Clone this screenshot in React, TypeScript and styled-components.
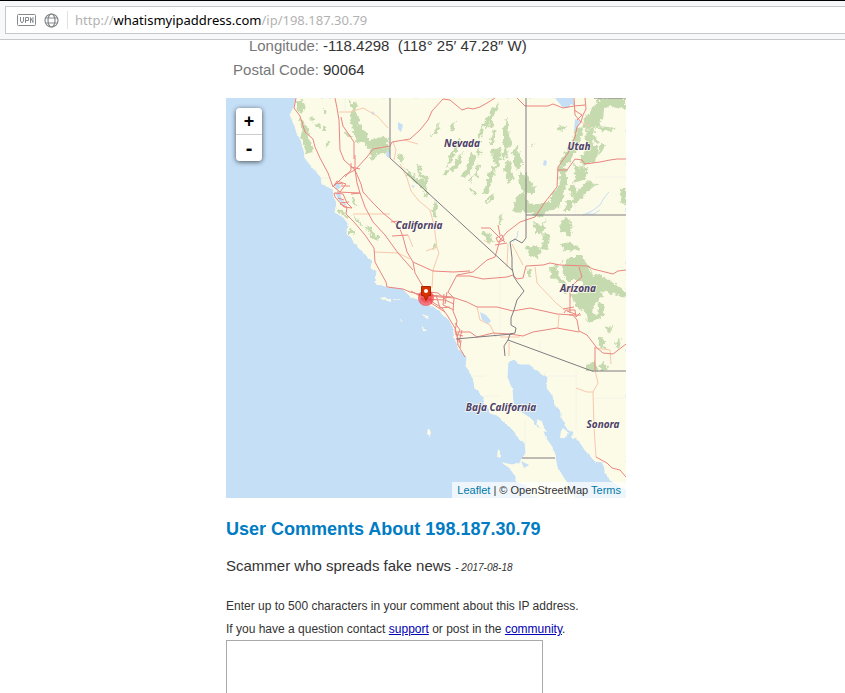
import React, { useId, useState } from "react";
import styled, { createGlobalStyle } from "styled-components";

const GlobalStyle = createGlobalStyle`
  *, *::before, *::after { box-sizing: border-box; }
  body {
    margin: 0;
    background: #fff;
    color: #333;
    font-family: "Liberation Sans", Arial, sans-serif;
  }
`;

const Browser = styled.div`
  display: flex;
  flex-direction: column;
  height: 100vh;
`;

const BrowserBar = styled.header`
  flex: none;
  display: flex;
  padding: 5px 0 5px 5px;
  height: 40px;
  background: #f7f8fa;
  border-top: 1px solid #000;
  border-bottom: 1px solid #c3c9cb;
`;

const AddressField = styled.div`
  flex: 1;
  display: flex;
  align-items: center;
  height: 28px;
  padding-left: 11px;
  background: #fff;
  border: 1px solid #c3c9cb;
  border-right: 0;
`;

const BarButton = styled.button`
  display: flex;
  margin: 0 8px 0 0;
  padding: 0;
  border: 0;
  background: none;
  color: #85898c;
`;

const Divider = styled.span`
  width: 1px;
  height: 18px;
  margin-right: 7px;
  background: #e0e2e4;
`;

const Url = styled.div`
  flex: 1;
  font: 13px/18px "Noto Sans", sans-serif;
  color: #b2b2b2;
  white-space: nowrap;
  outline: none;
`;

const Host = styled.span`
  color: #000;
`;

const Page = styled.main`
  flex: 1;
  min-height: 0;
  display: flex;
  justify-content: center;
  align-items: flex-start;
  padding-left: 7px;
  overflow: hidden auto;
  scrollbar-width: none;
`;

const Column = styled.div`
  width: 100%;
  max-width: 400px;
  margin-top: -6px;
`;

const Details = styled.table`
  border-collapse: collapse;
  margin-bottom: 16px;
  font-size: 15px;
  line-height: 24px;
`;

const DetailLabel = styled.th`
  width: 93px;
  padding: 0;
  font-weight: normal;
  text-align: right;
  color: #777;
  white-space: nowrap;
`;

const DetailValue = styled.td`
  padding: 0 0 0 4px;
  white-space: pre;
`;

const MapFrame = styled.section`
  position: relative;
  aspect-ratio: 1;
  overflow: hidden;
  background: #c5dff6;
`;

const MapDrawing = styled.svg`
  display: block;
  width: 100%;
  height: 100%;
`;

const MapLabel = styled.text`
  font: italic bold 10px "Noto Sans", sans-serif;
  fill: #4d3f69;
  stroke: #fffdf0;
  stroke-width: 2px;
  stroke-opacity: 0.7;
  paint-order: stroke;
  text-anchor: middle;
`;

const ZoomControl = styled.div`
  position: absolute;
  top: 10px;
  left: 10px;
  width: 26px;
  border-radius: 4px;
  box-shadow: 0 1px 5px rgba(0, 0, 0, 0.65);
`;

const ZoomButton = styled.button<{ $last?: boolean }>`
  display: block;
  width: 26px;
  height: ${(p) => (p.$last ? 26 : 27)}px;
  padding: 0;
  border: 0;
  border-bottom: ${(p) => (p.$last ? "0" : "1px solid #ccc")};
  border-radius: ${(p) => (p.$last ? "0 0 4px 4px" : "4px 4px 0 0")};
  background: #fff;
  color: #000;
  font: bold ${(p) => (p.$last ? 20 : 18)}px/26px "Liberation Sans", Arial, sans-serif;
`;

const Attribution = styled.div`
  position: absolute;
  right: 0;
  bottom: 0;
  padding: 0 5px;
  background: rgba(255, 255, 255, 0.7);
  font-size: 11px;
  line-height: 16px;
  white-space: nowrap;
`;

const MapLink = styled.a`
  color: #0078a8;
  text-decoration: none;
`;

const Heading = styled.h2`
  margin: 19px 0 0;
  font-size: 18px;
  line-height: 24px;
  color: #007cc3;
  white-space: nowrap;
`;

const Comment = styled.p`
  margin: 13px 0 0;
  font-size: 15px;
  line-height: 24px;
`;

const CommentDate = styled.em`
  font-size: 10px;
`;

const CommentForm = styled.form`
  margin-top: 15px;
  font-size: 12px;
  line-height: 23px;
`;

const FormText = styled.label`
  display: block;
`;

const FormNote = styled.p`
  margin: 0;
`;

const FormLink = styled.a`
  color: #0000b4;
`;

const CommentBox = styled.textarea`
  display: block;
  width: 100%;
  max-width: 317px;
  height: 100px;
  margin-top: -1px;
  border: 1px solid #a9a9a9;
  background: #fff;
  resize: none;
`;

/* The map is drawn in a 400 x 400 window whose origin is 226,98. */

const LAND =
  "M296 98 294 107 290 115 294 123 297 133 301 140 304 150 305 158 313 168 321 177 322 184 333 189 334 197 337 203 335 212 343 217 348 223 347 234 352 239 358 247 367 257 373 262 371 267 377 271 376 283 385 286 402 288 407 293 411 297 418 299 425 305 433 306 442 313 450 321 453 327 455 339 460 350 467 357 466 367 473 377 475 388 482 395 485 403 490 413 497 415 505 422 515 432 520 440 525 444 526 453 522 459 519 463 512 465 503 463 510 468 516 477 516 481 526 485 531 495 540 498H575L570 487 563 477 557 467 555 457 552 447 545 437 543 431 537 427 530 418 522 413 515 410 513 402 512 390 507 377 508 362 514 359 520 364 529 364 540 372 548 377 547 387 553 395 555 405 561 412 561 418 567 428 574 432 572 438 578 439 585 450 595 461 602 462 605 468 605 473 613 482 626 490V98Z";

const ISLANDS = [
  "M380 298 385 297 387 299 383 300Z",
  "M385 299 391 298 391 302 387 301Z",
  "M393 299 401 299 396 301Z",
  "M422 314 427 316 429 319 425 318Z",
  "M422 326 425 328 427 331 424 330Z",
  "M400 319 403 320 401 321Z",
  "M537 419 541 421 542 425 547 432 542 431 537 424Z",
  "M563 428 568 432 566 438 560 438 561 431Z",
  "M428 428 431 431 430 436 427 434Z",
  "M498 449 500 451 500 457 497 456Z",
];

const LAKES = [
  "M555 98 560 104 563 108 568 108 571 104 575 106 573 98Z",
  "M575 119 580 121 578 127 574 131Z",
  "M480 312 486 315 491 321 488 324 482 320Z",
  "M387 150 390 152 389 158 386 156Z",
  "M398 122 403 125 401 132 398 129Z",
  "M334 184 338 182 341 187 337 190Z",
  "M335 192 340 193 342 200 347 205 344 205 338 199Z",
  "M544 160 547 161 546 166 543 165Z",
  "M372 111 375 113 372 115Z",
  "M411 185 415 186 413 188Z",
  "M521 461 529 465 524 468Z",
];

const RIVERS =
  "M518 231 517 237 513 242M583 215 592 211 600 205 604 198 609 192M586 214 594 214 600 210";

const FORESTS = [
  "M297 101 302 99 306 107 301 113 297 108Z",
  "M300 118 305 123 308 129 309 137 313 149 312 154 306 152 302 138Z",
  "M347 98 353 103 357 104 355 112 359 117 358 124 366 132 369 140 381 137 389 139 388 146 378 147 369 150 366 144 357 142 353 130 350 119 353 110Z",
  "M370 148 389 146 390 152 376 154 374 162 369 158Z",
  "M417 165 421 167 422 173 430 178 425 181 418 174Z",
  "M398 152 404 160 402 164 398 160Z",
  "M404 168 412 172 415 179 428 180 428 185 420 186 410 179Z",
  "M420 186 424 184 429 193 428 198Z",
  "M434 198 437 207 436 218 433 218 433 208Z",
  "M352 215 359 219 364 228 358 223Z",
  "M365 225 370 228 375 235 380 237 378 241 370 236Z",
  "M349 228 356 232 355 234 349 234Z",
  "M432 243 436 243 435 250 432 249Z",
  "M336 208 342 211 350 217 343 216Z",
  "M490 111 499 104 494 114 492 127 488 129Z",
  "M449 155 455 149 450 163 446 168Z",
  "M460 155 463 152 460 165 453 171 449 169 455 164Z",
  "M471 153 476 155 472 169 465 178 461 176 467 167Z",
  "M477 148 483 151 478 158Z",
  "M491 149 499 147 502 154 498 164 492 163Z",
  "M503 127 508 118 508 130 512 143 506 153 510 163 514 178 509 184 504 169 507 160 503 146Z",
  "M514 151 520 153 522 163 518 171 514 165Z",
  "M519 172 525 175 529 187 526 196 520 185Z",
  "M515 200 523 191 528 203 535 204 542 204 549 201 549 210 539 218 532 213 522 212 513 211Z",
  "M487 174 496 168 494 178 487 193 482 195 487 184Z",
  "M526 171 533 187 537 186 532 195 526 190Z",
  "M430 137 440 122 437 133Z",
  "M502 213 501 226 497 223 499 216Z",
  "M600 98 626 98V109L611 106 604 109 603 119 591 129 582 128 585 117 593 109Z",
  "M586 117 596 117 601 125 594 128 586 127Z",
  "M598 126 617 128 610 131 601 130Z",
  "M585 129 595 130 593 145 598 148 595 162 582 166 580 158 586 149Z",
  "M578 126 583 131 577 150 569 161 560 168 561 159 570 145Z",
  "M558 165 567 168 567 184 560 196 555 204 549 207 551 195 560 184Z",
  "M573 164 586 168 586 179 573 183 575 175Z",
  "M568 188 574 183 576 192 589 180 597 184 587 192 575 204 572 197Z",
  "M561 188 565 191 559 208 548 211 549 202Z",
  "M568 201 574 201 569 212 563 212Z",
  "M560 126 566 127 565 131 558 130Z",
  "M621 190 626 188V206L620 202Z",
  "M561 220 569 218 573 230 569 237 560 230Z",
  "M534 222 542 226 546 219 543 233 536 235Z",
  "M525 247 535 246 541 248 539 257 532 258Z",
  "M543 232 551 235 547 250 541 249 544 240Z",
  "M561 242 577 245 579 250 570 251 562 249Z",
  "M562 265 570 256 582 256 587 264 593 275 603 276 626 292 626 297 612 294 600 290 603 297 597 299 592 311 597 319 588 323 585 312 575 306 571 295 582 289 582 281 568 281 563 275Z",
  "M549 267 557 266 560 277 565 283 567 294 563 291 561 282 551 278Z",
  "M597 302 604 304 604 317 593 320 599 312Z",
  "M587 318 597 315 595 320 586 321Z",
  "M599 338 605 337 603 344 606 349 599 346Z",
  "M606 328 613 327 609 334Z",
  "M615 342 621 339 619 350Z",
  "M586 367 595 360 597 371 586 371Z",
  "M602 362 609 366 607 371 599 371Z",
  "M481 232 490 233 493 244 488 241Z",
];

const THIN_FORESTS =
  "M454 123 451 131M459 139 453 155M484 124 479 138M488 117 486 127M475 141 480 142M495 130 492 145M505 150 503 160M517 145 514 155M447 170 445 175M472 176 470 182M479 164 475 177M493 195 486 203M499 163 492 171M471 188 475 194M323 128 327 129M316 124 320 128M328 142 326 145M345 132 350 137M353 199 355 206M593 137 598 143M604 144 598 154M531 147 534 145M529 268 530 277M322 110 326 113M311 117 314 121";

const MAJOR_ROADS = [
  "M335 98 337 108 339 120 340 150 344 160 355 170 361 184 363 192 373 203 383 213 395 223 400 229 403 237 407 252 413 262 415 273 422 285 426 292",
  "M296 98 294 108 300 116 305 132 313 139 315 147 320 158 328 173 333 187",
  "M333 187 345 175 355 170 367 157 373 149 390 146 392 142 410 139 420 130 428 120 432 111 443 99 450 100 462 110 468 108 473 109 480 107 487 103 495 98",
  "M517 98 525 106 548 106 553 104 563 108 574 106 585 105",
  "M355 170 355 155M351 167 360 169M345 177 351 170 351 163",
  "M351 194 360 193 365 207 373 222 385 235 398 253 413 270",
  "M340 204 347 207 346 214 354 222 365 235 374 248 375 262 381 273 386 282 387 287 403 289 410 292 423 295",
  "M448 292 457 275 473 272 487 260 495 257 500 240 507 232 520 222 535 217 545 202 557 187 558 167 568 153 575 137 577 127 581 122 575 115 574 98",
  "M585 98 586 109 583 115 581 122",
  "M558 170 567 170 575 159 582 160 585 164 600 162 610 160 617 159 626 159",
  "M413 262 433 271 453 272 470 271M457 276 470 276 483 279 507 277 513 275 517 279 523 278 526 266 543 265 550 263 560 265 587 266 593 269 613 274 618 271 626 270",
  "M426 295 440 297 455 298 467 302 477 307 497 307 513 311 530 308 557 314 573 315 577 320 579 331 587 335 597 348 603 353 613 354 626 344",
  "M457 332 470 332 477 337 493 333 510 334 523 336 533 332 557 328 579 332",
  "M570 313 570 287 582 277 579 267",
  "M426 297 434 303 442 308 447 315 455 328 457 335 458 345 465 357",
  "M448 292 454 298 453 311 457 321 455 331 460 343",
  "M481 228 490 228 500 238 505 242M495 245 507 243M500 235 498 225",
  "M595 347 595 370M596 457 607 463 612 468 620 470 626 477",
  "M333 187 337 181 346 184 340 192 334 187M334 193 343 194 347 203 352 208 344 207 335 197Z",
  "M337 192 360 193M341 186 350 186",
  "M354 159 354 142 343 126 341 117M360 193 357 183 355 170",
  "M564 313 566 310 575 310 576 317 580 313M563 309 574 307M569 315 581 315",
];

const URBAN_ROADS =
  "M418 294 452 297M420 299 445 300 454 304M431 293 431 303 445 312M436 295 440 308 450 307M444 294 443 305 454 310M421 291 438 293 445 299M411 291 420 296M447 292 445 304M455 323 460 330 457 336M462 330 459 342M455 334 463 336M461 340 460 348M496 238 502 235 504 240 498 242ZM567 311 575 314M336 183 343 184M338 198 344 200M340 203 349 202M574 110 582 115 577 120M391 222 399 221M392 236 408 235";

const MINOR_ROADS = [
  "M339 112 350 112 363 108 377 116 388 128M400 164 407 178 411 191 419 201 430 210 434 225 437 248 439 253 433 270 432 288",
  "M374 252 398 253 410 259M408 235 413 247M437 247 426 251",
  "M508 244 507 267M512 244 523 265M535 267 537 283 556 303 565 310M559 315 558 328",
  "M477 307 480 320 490 325 496 337M500 337 520 337M509 342 509 356",
  "M595 370 598 383 593 392 594 427 596 457M576 388 587 392 593 392",
  "M581 122 590 126M595 348 610 350 611 364M484 240 490 244",
  "M353 214 390 214M393 142 396 150 394 160M404 140 418 144",
];

const COUNTY_LINES =
  "M300 178H333M345 98V112M450 270V285M545 371V377M576 371V430M595 398H626M548 376H576M500 270V334M530 387H545M575 178V215M595 177H626M525 420V458M540 342V352M466 376H485M473 396H500";

const BORDERS =
  "M390 98V158L513 271M526 98V238L522 243 515 239 510 242 511 249 512 258 512 268 514 277 518 283 524 291 517 300 514 310 511 318 511 325 516 328 515 333 510 334 508 340 504 346 505 356M526 215H626M594 98H626M456 339 512 334M508 340 592 371H626M522 458H555";

const PLACES = [
  { name: "Nevada", x: 462, y: 147 },
  { name: "Utah", x: 579, y: 150 },
  { name: "California", x: 419, y: 229 },
  { name: "Arizona", x: 578, y: 292 },
  { name: "Baja California", x: 501, y: 411 },
  { name: "Sonora", x: 603, y: 428 },
];

function RegionMap() {
  const rough = useId();
  const wobble = useId();
  const land = useId();
  return (
    <MapDrawing viewBox="226 98 400 400" role="img" aria-label="Map of California and neighbouring states">
      <defs>
        <filter id={rough} x="-5%" y="-5%" width="110%" height="110%" colorInterpolationFilters="sRGB">
          <feTurbulence type="fractalNoise" baseFrequency="0.22" numOctaves="3" seed="8" />
          <feDisplacementMap in="SourceGraphic" scale="7" xChannelSelector="R" yChannelSelector="G" />
        </filter>
        <filter id={wobble} x="-5%" y="-5%" width="110%" height="110%" colorInterpolationFilters="sRGB">
          <feTurbulence type="fractalNoise" baseFrequency="0.15" numOctaves="2" seed="3" />
          <feDisplacementMap in="SourceGraphic" scale="3" xChannelSelector="R" yChannelSelector="G" />
        </filter>
        <clipPath id={land}>
          <path d={LAND} />
        </clipPath>
      </defs>
      <g fill="#fcfbe7" filter={`url(#${wobble})`}>
        <path d={LAND} stroke="#fcfbe7" />
        {ISLANDS.map((d) => <path key={d} d={d} />)}
      </g>
      <g clipPath={`url(#${land})`}>
        <path d={COUNTY_LINES} fill="none" stroke="#f3f4e8" />
        <g fill="#c5daae" filter={`url(#${rough})`}>
          {FORESTS.map((d) => <path key={d} d={d} />)}
          <path d={THIN_FORESTS} fill="none" stroke="#c5daae" strokeWidth="3" />
        </g>
      </g>
      <g fill="#c5dff6">
        {LAKES.map((d) => <path key={d} d={d} />)}
        <path d={RIVERS} fill="none" stroke="#c5dff6" />
      </g>
      <g fill="none" strokeLinejoin="round">
        <g stroke="#f8c9ac">{MINOR_ROADS.map((d) => <path key={d} d={d} />)}</g>
        <g stroke="#ea8580">{MAJOR_ROADS.map((d) => <path key={d} d={d} />)}</g>
        <path d={URBAN_ROADS} stroke="#ea8580" />
      </g>
      <path d={BORDERS} fill="none" stroke="#817b82" />
      {PLACES.map((p) => <MapLabel key={p.name} x={p.x} y={p.y}>{p.name}</MapLabel>)}
      <circle cx="426" cy="298" r="8" fill="#f03040" fillOpacity="0.65" />
      <circle cx="426" cy="298" r="5" fill="#f03040" fillOpacity="0.4" />
      <path d="M421.5 286.5h9v9h-2l-2.5 5-2.5-5h-2z" fill="#d93100" stroke="#a82500" />
      <circle cx="426" cy="291" r="2" fill="#fff" />
    </MapDrawing>
  );
}

function VpnIcon() {
  return (
    <svg width="19" height="12" viewBox="0 0 19 12" fill="none" stroke="currentColor" aria-hidden="true">
      <rect x="0.5" y="0.5" width="18" height="11" rx="1" />
      <path d="M3.5 3v4l1.5 2 1.5-2V3M8.5 9V3.5h3v3h-3M13.5 9V3.5l2.5 5V3" />
    </svg>
  );
}

function GlobeIcon() {
  return (
    <svg width="15" height="15" viewBox="0 0 15 15" fill="none" stroke="currentColor" strokeWidth="1.2" aria-hidden="true">
      <circle cx="7.5" cy="7.5" r="6.5" />
      <ellipse cx="7.5" cy="7.5" rx="3.5" ry="6.5" />
      <path d="M1.5 5h12M1.5 10h12" />
    </svg>
  );
}

export default function App() {
  const [comment, setComment] = useState("");
  return (
    <Browser>
      <GlobalStyle />
      <BrowserBar>
        <AddressField>
          <BarButton type="button" aria-label="VPN"><VpnIcon /></BarButton>
          <BarButton type="button" aria-label="Site information"><GlobeIcon /></BarButton>
          <Divider />
          <Url role="textbox" aria-label="Address" contentEditable suppressContentEditableWarning spellCheck={false}>
            http://<Host>whatismyipaddress.com</Host>/ip/198.187.30.79
          </Url>
        </AddressField>
      </BrowserBar>
      <Page>
        <Column>
          <Details>
            <tbody>
              <tr>
                <DetailLabel scope="row">Longitude:</DetailLabel>
                <DetailValue>{"-118.4298  (118° 25′ 47.28″ W)"}</DetailValue>
              </tr>
              <tr>
                <DetailLabel scope="row">Postal Code:</DetailLabel>
                <DetailValue>90064</DetailValue>
              </tr>
            </tbody>
          </Details>
          <MapFrame aria-label="Location map">
            <RegionMap />
            <ZoomControl>
              <ZoomButton type="button" aria-label="Zoom in">+</ZoomButton>
              <ZoomButton type="button" aria-label="Zoom out" $last>-</ZoomButton>
            </ZoomControl>
            <Attribution>
              <MapLink href="#leaflet">Leaflet</MapLink> | © OpenStreetMap <MapLink href="#terms">Terms</MapLink>
            </Attribution>
          </MapFrame>
          <Heading>User Comments About 198.187.30.79</Heading>
          <Comment>
            Scammer who spreads fake news <CommentDate>- 2017-08-18</CommentDate>
          </Comment>
          <CommentForm onSubmit={(e) => e.preventDefault()}>
            <FormText htmlFor="comment">Enter up to 500 characters in your comment about this IP address.</FormText>
            <FormNote>
              If you have a question contact <FormLink href="#support">support</FormLink> or post in the{" "}
              <FormLink href="#community">community</FormLink>.
            </FormNote>
            <CommentBox id="comment" maxLength={500} value={comment} onChange={(e) => setComment(e.target.value)} />
          </CommentForm>
        </Column>
      </Page>
    </Browser>
  );
}
